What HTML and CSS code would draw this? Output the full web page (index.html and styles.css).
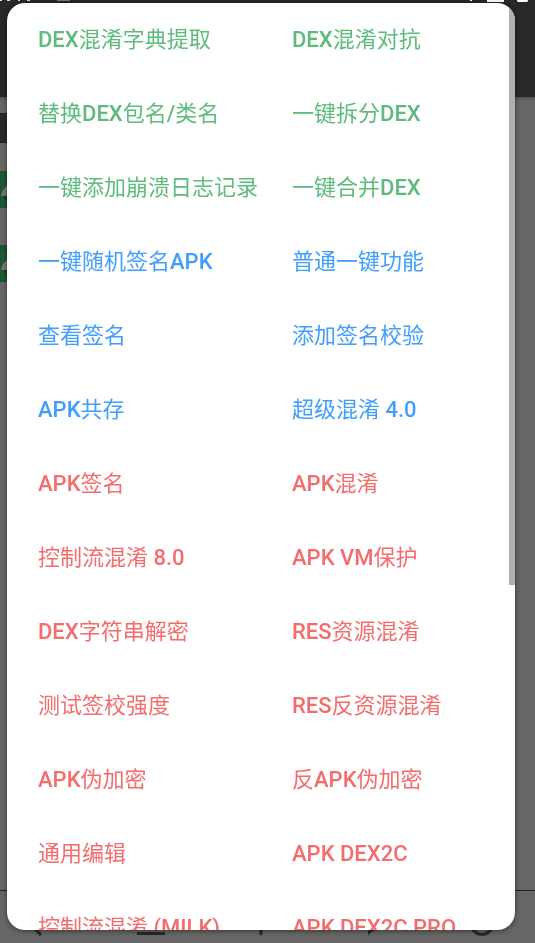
FILE: index.html
```html
<!DOCTYPE html>
<html lang="zh-CN">
<head>
<meta charset="utf-8">
<meta name="viewport" content="width=device-width, initial-scale=1">
<title>APK</title>
<link rel="stylesheet" href="styles.css">
</head>
<body>
<div class="app" aria-hidden="true">
  <header class="topbar">
    <svg class="status-left" width="80" height="3" viewBox="0 0 80 3"><path d="M0 0h2v1H0zM7 0h3v1H7zM18 0h2v1h-2zM27 0h3v1h-3z" fill="#ddd"/><path d="M57 0h13v1H57z" fill="#777"/></svg>
    <svg class="status-right" width="80" height="3" viewBox="0 0 80 3"><path d="M15 0h2v1h-2zM32 0h17v2H32zM62 0h11v1l-1 1h-9l-1-1z" fill="#fff"/></svg>
  </header>
  <main class="files">
    <div class="path"></div>
    <svg class="file-icon" width="8" height="37" viewBox="0 0 8 37"><path d="M0 0h8v37H0z" fill="#1a5630"/><path d="M0 10h8M0 29h8M3 0v37" stroke="#236039" stroke-width="1"/><path d="M1 25q1-7 7-11v11z" fill="#777"/><path d="M3 25h5v7z" fill="#103d22"/></svg>
    <svg class="file-icon" width="8" height="37" viewBox="0 0 8 37"><path d="M0 0h8v37H0z" fill="#1a5630"/><path d="M0 10h8M0 29h8M3 0v37" stroke="#236039" stroke-width="1"/><path d="M1 25q1-7 7-11v11z" fill="#777"/><path d="M3 25h5v7z" fill="#103d22"/></svg>
  </main>
  <footer class="toolbar">
    <svg width="26" height="24" viewBox="0 0 26 24"><path d="M14 0 4 11l10 10"/></svg>
    <svg width="26" height="24" viewBox="0 0 26 24"><path d="M-1 19.500h28"/></svg>
    <svg width="26" height="24" viewBox="0 0 26 24"><path d="M13 1v20M3 11h20"/></svg>
    <svg width="26" height="24" viewBox="0 0 26 24"><path class="solid" d="M9 0v21l15-11z"/></svg>
    <svg width="26" height="24" viewBox="0 0 26 24"><circle cx="13" cy="10" r="10.500"/></svg>
  </footer>
</div>
<div class="dialog" role="dialog" aria-modal="true" aria-label="功能">
  <div class="menu">
    <button class="item green"><b>DEX</b>混淆字典提取</button>
    <button class="item green"><b>DEX</b>混淆对抗</button>
    <button class="item green">替换<b>DEX</b>包名<b>/</b>类名</button>
    <button class="item green">一键拆分<b>DEX</b></button>
    <button class="item green">一键添加崩溃日志记录</button>
    <button class="item green">一键合并<b>DEX</b></button>
    <button class="item blue">一键随机签名<b>APK</b></button>
    <button class="item blue">普通一键功能</button>
    <button class="item blue">查看签名</button>
    <button class="item blue">添加签名校验</button>
    <button class="item blue"><b>APK</b>共存</button>
    <button class="item blue">超级混淆 <b>4.0</b></button>
    <button class="item red"><b>APK</b>签名</button>
    <button class="item red"><b>APK</b>混淆</button>
    <button class="item red">控制流混淆 <b>8.0</b></button>
    <button class="item red"><b>APK VM</b>保护</button>
    <button class="item red"><b>DEX</b>字符串解密</button>
    <button class="item red"><b>RES</b>资源混淆</button>
    <button class="item red">测试签校强度</button>
    <button class="item red"><b>RES</b>反资源混淆</button>
    <button class="item red"><b>APK</b>伪加密</button>
    <button class="item red">反<b>APK</b>伪加密</button>
    <button class="item red">通用编辑</button>
    <button class="item red"><b>APK DEX2C</b></button>
    <button class="item red">控制流混淆 <b>(MILK)</b></button>
    <button class="item red"><b>APK DEX2C PRO</b></button>
  </div>
  <div class="scrollbar"></div>
</div>
</body>
</html>
```
FILE: styles.css
```css
* {
  box-sizing: border-box;
}

body {
  margin: 0;
  background: #666;
  font-family: Roboto, "Noto Sans CJK SC", sans-serif;
  overflow: hidden;
}

.app {
  display: flex;
  flex-direction: column;
  height: 100vh;
}

.topbar {
  display: flex;
  justify-content: space-between;
  height: 97px;
  background: #272829;
  box-shadow: 0 1px 3px rgba(0, 0, 0, 0.3);
}

.files {
  display: flex;
  flex: 1;
  flex-direction: column;
  align-items: flex-start;
  padding-top: 16px;
}

.path {
  width: 50%;
  height: 30px;
  margin-bottom: 28px;
  background: #272829;
}

.file-icon {
  margin-bottom: 37px;
}

.toolbar {
  display: flex;
  align-items: flex-start;
  justify-content: space-between;
  height: 53px;
  padding: 23px 40px 0 27px;
  border-top: 1px solid #222;
}

.toolbar svg {
  flex: none;
  overflow: visible;
  fill: none;
  stroke: #272829;
  stroke-width: 3;
}

.toolbar .solid {
  fill: #272829;
  stroke: none;
}

.dialog {
  position: fixed;
  inset: 3px 20px 13px 7px;
  overflow: hidden;
  border-radius: 18px;
  background: #fff;
  box-shadow: 0 1px 5px rgba(0, 0, 0, 0.5);
}

.menu {
  display: grid;
  grid-template-columns: 1fr 1fr;
  grid-auto-rows: 74px;
}

.item {
  padding: 0 0 0 31px;
  border: 0;
  background: none;
  font: inherit;
  font-size: 22px;
  line-height: 24px;
  text-align: left;
  white-space: nowrap;
}

.item b {
  font-weight: 500;
}

.green {
  color: #5dbb7c;
}

.blue {
  color: #409eff;
}

.red {
  color: #f56c6c;
}

.scrollbar {
  position: absolute;
  top: 0;
  right: 0;
  width: 6px;
  height: 582px;
  background: #b0b0b0;
}
```
